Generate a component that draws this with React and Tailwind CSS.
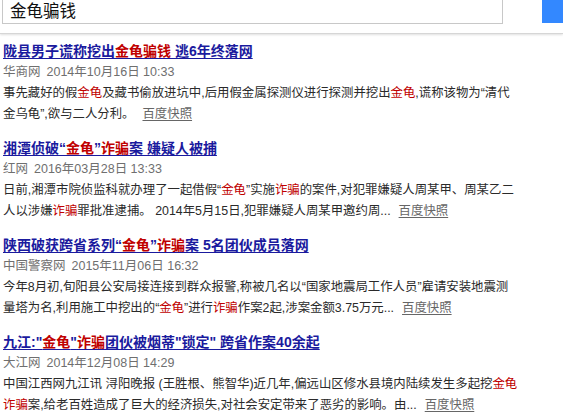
const results = [
  {
    title: [["陇县男子谎称挖出"], ["金龟骗钱", true], [" 逃6年终落网"]],
    source: "华商网",
    time: "2014年10月16日 10:33",
    snippet: [
      ["事先藏好的假"], ["金龟", true], ["及藏书偷放进坑中,后用假金属探测仪进行探测并挖出"], ["金龟", true],
      [",谎称该物为“清代金乌龟”,欲与二人分利。"],
    ],
  },
  {
    title: [["湘潭侦破“"], ["金龟", true], ["”"], ["诈骗", true], ["案 嫌疑人被捕"]],
    source: "红网",
    time: "2016年03月28日 13:33",
    snippet: [
      ["日前,湘潭市院侦监科就办理了一起借假“"], ["金龟", true], ["”实施"], ["诈骗", true],
      ["的案件,对犯罪嫌疑人周某甲、周某乙二人以涉嫌"], ["诈骗", true], ["罪批准逮捕。 2014年5月15日,犯罪嫌疑人周某甲邀约周..."],
    ],
  },
  {
    title: [["陕西破获跨省系列“"], ["金龟", true], ["”"], ["诈骗", true], ["案 5名团伙成员落网"]],
    source: "中国警察网",
    time: "2015年11月06日 16:32",
    snippet: [
      ["今年8月初,旬阳县公安局接连接到群众报警,称被几名以“国家地震局工作人员”雇请安装地震测量塔为名,利用施工中挖出的“"],
      ["金龟", true], ["”进行"], ["诈骗", true], ["作案2起,涉案金额3.75万元..."],
    ],
  },
  {
    title: [["九江:\""], ["金龟", true], ["\""], ["诈骗", true], ["团伙被烟蒂\"锁定\" 跨省作案40余起"]],
    source: "大江网",
    time: "2014年12月08日 14:29",
    snippet: [
      ["中国江西网九江讯 浔阳晚报 (王胜根、熊智华)近几年,偏远山区修水县境内陆续发生多起挖"], ["金龟", true],
      ["诈骗", true], ["案,给老百姓造成了巨大的经济损失,对社会安定带来了恶劣的影响。由..."],
    ],
  },
];

const font = { fontFamily: '"Liberation Sans", "Noto Sans CJK SC", sans-serif' };

const Result = ({ title, source, time, snippet }) => (
  <div className="mb-[13px]">
    <a href="#" className="block text-[14px] leading-[21px] font-bold text-[#1a1a9e] underline underline-offset-2">
      {title.map(([t, hl], i) => (
        <span key={i} className={hl ? "text-[#c00000]" : ""}>{t}</span>
      ))}
    </a>
    <div className="text-[12.5px] leading-[21px] text-[#6f6f6f]">
      {source}
      <span className="ml-[6px]">{time}</span>
    </div>
    <p className="text-[12.4px] leading-[21px] text-[#2a2a2a] pr-[40px]">
      {snippet.map(([t, hl], i) => (
        <span key={i} className={hl ? "text-[#c00000]" : ""}>{t}</span>
      ))}
      <a href="#" className="ml-[8px] text-[#666] underline underline-offset-2">百度快照</a>
    </p>
  </div>
);

export default function App() {
  return (
    <div className="w-[563px] h-[414px] overflow-hidden bg-white" style={font}>
      <div className="h-[34px] border-b border-[#d6d6d6] shadow-[0_1px_2px_rgba(0,0,0,0.12)] flex items-start">
        <div className="ml-[2px] w-[501px] h-[24px] border-x border-b border-[#c8c8c8] flex items-center pl-[7px] text-[16.5px] leading-none text-[#111]">
          金龟骗钱
        </div>
        <div className="ml-auto w-[21px] h-[23px] bg-[#3388ff]" />
      </div>
      <div className="px-[3px] pt-[7px]">
        {results.map((r, i) => (
          <Result key={i} {...r} />
        ))}
      </div>
    </div>
  );
}
